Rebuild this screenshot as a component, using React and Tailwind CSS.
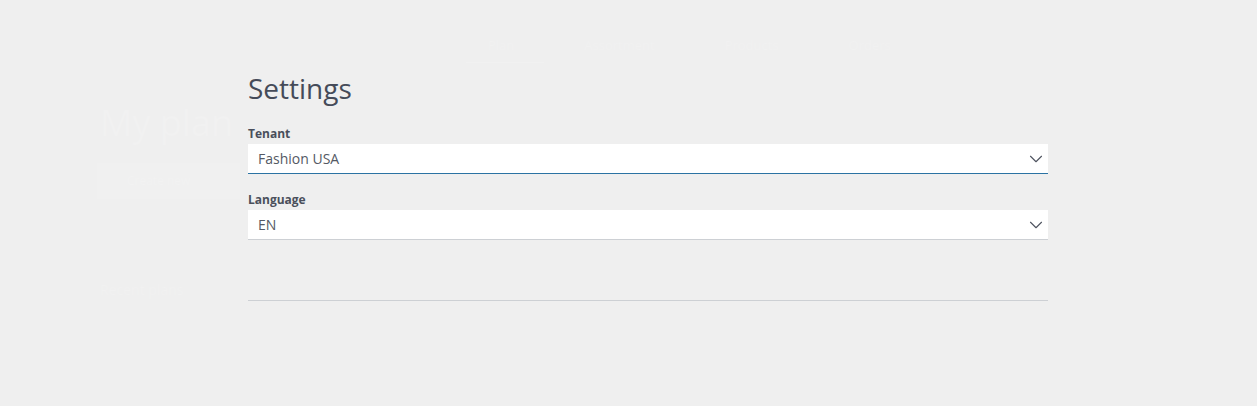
import { ChevronDown } from "lucide-react";

function Select({ label, value, focused }) {
  return (
    <label className="block">
      <div className="text-[12px] font-bold text-[#4a4f5b] leading-[16px] mb-[2px]">{label}</div>
      <div
        className={
          "h-[30px] bg-white flex items-center justify-between pl-[10px] pr-[1px] border-b " +
          (focused ? "border-[#2b73a3]" : "border-[#cdd0d4]")
        }
      >
        <span className="text-[14px] text-[#545964]">{value}</span>
        <ChevronDown className="w-[22px] h-[22px] text-[#4f5460]" strokeWidth={1.2} />
      </div>
    </label>
  );
}

export default function App() {
  return (
    <div
      className="relative w-full h-[406px] bg-[#efefef] overflow-hidden"
      style={{ fontFamily: '"Open Sans", "Noto Sans", sans-serif' }}
    >
      {/* faded page behind the panel */}
      <div className="absolute inset-0 pointer-events-none select-none">
        <div className="flex gap-[70px] pl-[488px] pt-[36px] text-[13px] text-[#f1f1f1]">
          <span>Plan</span>
          <span>Assortment</span>
          <span>Products</span>
          <span>Orders</span>
        </div>
        <div className="ml-[466px] mt-[6px] w-[78px] h-px bg-[#f1f1f1]" />
        <div className="ml-[100px] mt-[40px] text-[36px] text-[#f1f1f1] leading-[40px]">My plan</div>
        <div className="ml-[97px] mt-[20px] w-[143px] h-[36px] bg-[#f0f0f0] flex items-center pl-[30px] text-[12px] text-[#f2f2f2]">
          Create new
        </div>
        <div className="ml-[100px] mt-[80px] text-[14px] text-[#f1f1f1]">Recent plans</div>
      </div>

      <div className="relative ml-[248px] w-[800px] pt-[70px]">
        <h1 className="text-[28px] leading-[36px] text-[#454b59] mb-[20px]">Settings</h1>
        <div className="flex flex-col gap-[18px]">
          <Select label="Tenant" value="Fashion USA" focused />
          <Select label="Language" value="EN" />
        </div>
        <div className="mt-[60px] h-px bg-[#cdd0d4]" />
      </div>
    </div>
  );
}
